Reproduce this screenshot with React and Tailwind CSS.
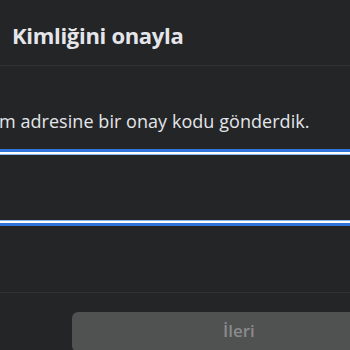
export default function App() {
  return (
    <div
      className="w-[350px] h-[350px] overflow-hidden bg-[#242526] text-[#e4e6eb]"
      style={{ fontFamily: '"Open Sans", "Noto Sans", sans-serif' }}
    >
      {/* Header */}
      <div className="h-[66px] flex items-center px-3 border-b border-[#303133]">
        <h1 className="text-[22px] font-bold leading-none tracking-[-0.3px] text-[#e4e6eb] pt-[4px]">
          Kimliğini onayla
        </h1>
      </div>

      {/* Body */}
      <div className="h-[227px] border-b border-[#303133]">
        <p className="pt-[41px] text-[18px] leading-[28px] tracking-[0.05px] whitespace-nowrap -ml-[1px]">
          m adresine bir onay kodu gönderdik.
        </p>
        <div className="mt-[17px] -mx-4 h-[71px] border-2 border-white bg-[#242526] shadow-[0_0_0_3px_#2f74d8,inset_0_0_0_1px_#8ab4f0]" />
      </div>

      {/* Footer */}
      <div className="pt-[19px] pl-[72px]">
        <button
          disabled
          className="w-[320px] h-[40px] rounded-md bg-[#505151] text-[#8a8b8c] text-[17px] font-semibold flex items-start pt-[6px] pl-[151px]"
        >
          İleri
        </button>
      </div>
    </div>
  );
}
